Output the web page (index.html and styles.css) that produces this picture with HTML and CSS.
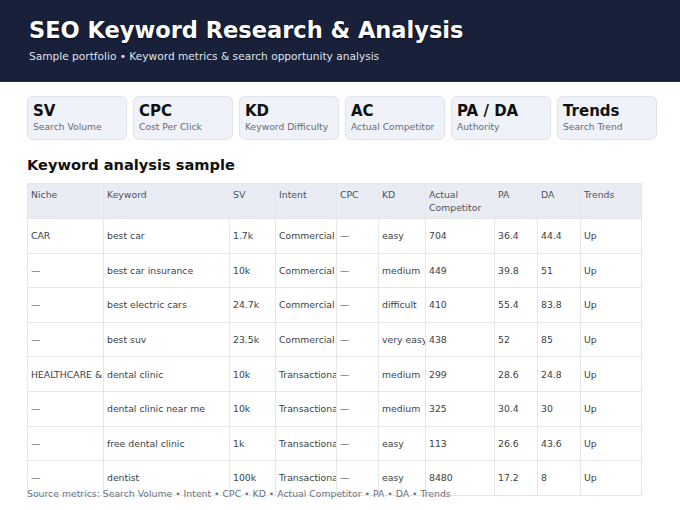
FILE: index.html
```html
<!DOCTYPE html>
<html lang="en">
<head>
<meta charset="utf-8">
<title>SEO Keyword Research &amp; Analysis</title>
<link rel="stylesheet" href="styles.css">
</head>
<body>
<header class="hero">
  <h1 class="hero-title">SEO Keyword Research &amp; Analysis</h1>
  <p class="hero-sub">Sample portfolio • Keyword metrics &amp; search opportunity analysis</p>
</header>
<main class="content">
  <section class="cards">
    <div class="card"><div class="card-title">SV</div><div class="card-sub">Search Volume</div></div>
    <div class="card"><div class="card-title">CPC</div><div class="card-sub">Cost Per Click</div></div>
    <div class="card"><div class="card-title">KD</div><div class="card-sub">Keyword Difficulty</div></div>
    <div class="card"><div class="card-title">AC</div><div class="card-sub">Actual Competitor</div></div>
    <div class="card"><div class="card-title">PA / DA</div><div class="card-sub">Authority</div></div>
    <div class="card"><div class="card-title">Trends</div><div class="card-sub">Search Trend</div></div>
  </section>
  <h2 class="section-title">Keyword analysis sample</h2>
  <div class="table-wrap">
    <table class="kw-table">
      <colgroup>
        <col class="c-niche"><col class="c-kw"><col class="c-sv"><col class="c-intent"><col class="c-cpc"><col class="c-kd"><col class="c-ac"><col class="c-pa"><col class="c-da"><col class="c-tr">
      </colgroup>
      <thead>
        <tr><th>Niche</th><th>Keyword</th><th>SV</th><th>Intent</th><th>CPC</th><th>KD</th><th class="wrap">Actual Competitor</th><th>PA</th><th>DA</th><th>Trends</th></tr>
      </thead>
      <tbody>
        <tr><td>CAR</td><td>best car</td><td>1.7k</td><td>Commercial</td><td>—</td><td>easy</td><td>704</td><td>36.4</td><td>44.4</td><td>Up</td></tr>
        <tr><td>—</td><td>best car insurance</td><td>10k</td><td>Commercial</td><td>—</td><td>medium</td><td>449</td><td>39.8</td><td>51</td><td>Up</td></tr>
        <tr><td>—</td><td>best electric cars</td><td>24.7k</td><td>Commercial</td><td>—</td><td>difficult</td><td>410</td><td>55.4</td><td>83.8</td><td>Up</td></tr>
        <tr><td>—</td><td>best suv</td><td>23.5k</td><td>Commercial</td><td>—</td><td>very easy</td><td>438</td><td>52</td><td>85</td><td>Up</td></tr>
        <tr><td>HEALTHCARE &amp; MEDICAL</td><td>dental clinic</td><td>10k</td><td>Transactional</td><td>—</td><td>medium</td><td>299</td><td>28.6</td><td>24.8</td><td>Up</td></tr>
        <tr><td>—</td><td>dental clinic near me</td><td>10k</td><td>Transactional</td><td>—</td><td>medium</td><td>325</td><td>30.4</td><td>30</td><td>Up</td></tr>
        <tr><td>—</td><td>free dental clinic</td><td>1k</td><td>Transactional</td><td>—</td><td>easy</td><td>113</td><td>26.6</td><td>43.6</td><td>Up</td></tr>
        <tr><td>—</td><td>dentist</td><td>100k</td><td>Transactional</td><td>—</td><td>easy</td><td>8480</td><td>17.2</td><td>8</td><td>Up</td></tr>
      </tbody>
    </table>
  </div>
  <p class="footnote">Source metrics: Search Volume • Intent • CPC • KD • Actual Competitor • PA • DA • Trends</p>
</main>
</body>
</html>
```
FILE: styles.css
```css
html, body {
  margin: 0;
  padding: 0;
  background: #ffffff;
  font-family: "DejaVu Sans", "Noto Sans", sans-serif;
  color: #222;
}
.hero {
  background: #19203a;
  height: 82px;
  box-sizing: border-box;
  padding: 15px 29px 0;
  border-bottom: 1px solid #2a3146;
}
.hero-title {
  margin: 0;
  font-size: 22.5px;
  font-weight: bold;
  color: #ffffff;
  line-height: 30px;
  text-shadow: 0 1px 2px rgba(0,0,0,0.6);
}
.hero-sub {
  margin: 4px 0 0;
  font-size: 10.6px;
  color: #dfe3ea;
  line-height: 14px;
}
.content {
  padding: 14px 27px 0;
}
.cards {
  display: flex;
  gap: 6px;
}
.card {
  flex: 0 0 100px;
  width: 100px;
  height: 44px;
  box-sizing: border-box;
  background: #eff2f8;
  border: 1px solid #dfe4ec;
  border-radius: 6px;
  padding: 6px 5px 0;
}
.card-title {
  font-size: 15px;
  font-weight: bold;
  line-height: 17px;
  color: #111;
}
.card-sub {
  font-size: 9.2px;
  color: #666c75;
  line-height: 13px;
  white-space: nowrap;
}
.section-title {
  margin: 15px 0 0;
  font-size: 14.6px;
  font-weight: bold;
  line-height: 20px;
  color: #111;
}
.table-wrap {
  margin-top: 8px;
  height: 304px;
}
.kw-table {
  width: 614px;
  table-layout: fixed;
  border-collapse: collapse;
  font-size: 9.3px;
  color: #3a3f47;
}
.c-niche { width: 76px; }
.c-kw { width: 126px; }
.c-sv { width: 46px; }
.c-intent { width: 61px; }
.c-cpc { width: 42px; }
.c-kd { width: 47px; }
.c-ac { width: 69px; }
.c-pa { width: 43px; }
.c-da { width: 43px; }
.c-tr { width: 61px; }
.kw-table th {
  background: #e9edf3;
  color: #4b5260;
  font-weight: normal;
  text-align: left;
  vertical-align: top;
  padding: 4px 3px 0;
  height: 30px;
  line-height: 13px;
  border: 1px solid #e4e7ec;
  white-space: nowrap;
  overflow: hidden;
}
.kw-table th.wrap {
  white-space: normal;
}
.kw-table td {
  height: 33.6px;
  padding: 0 3px;
  border: 1px solid #e4e7ec;
  white-space: nowrap;
  overflow: hidden;
  vertical-align: middle;
  line-height: 13px;
}
.footnote {
  margin: 0;
  font-size: 9.3px;
  color: #6b7280;
  line-height: 13px;
}
```
